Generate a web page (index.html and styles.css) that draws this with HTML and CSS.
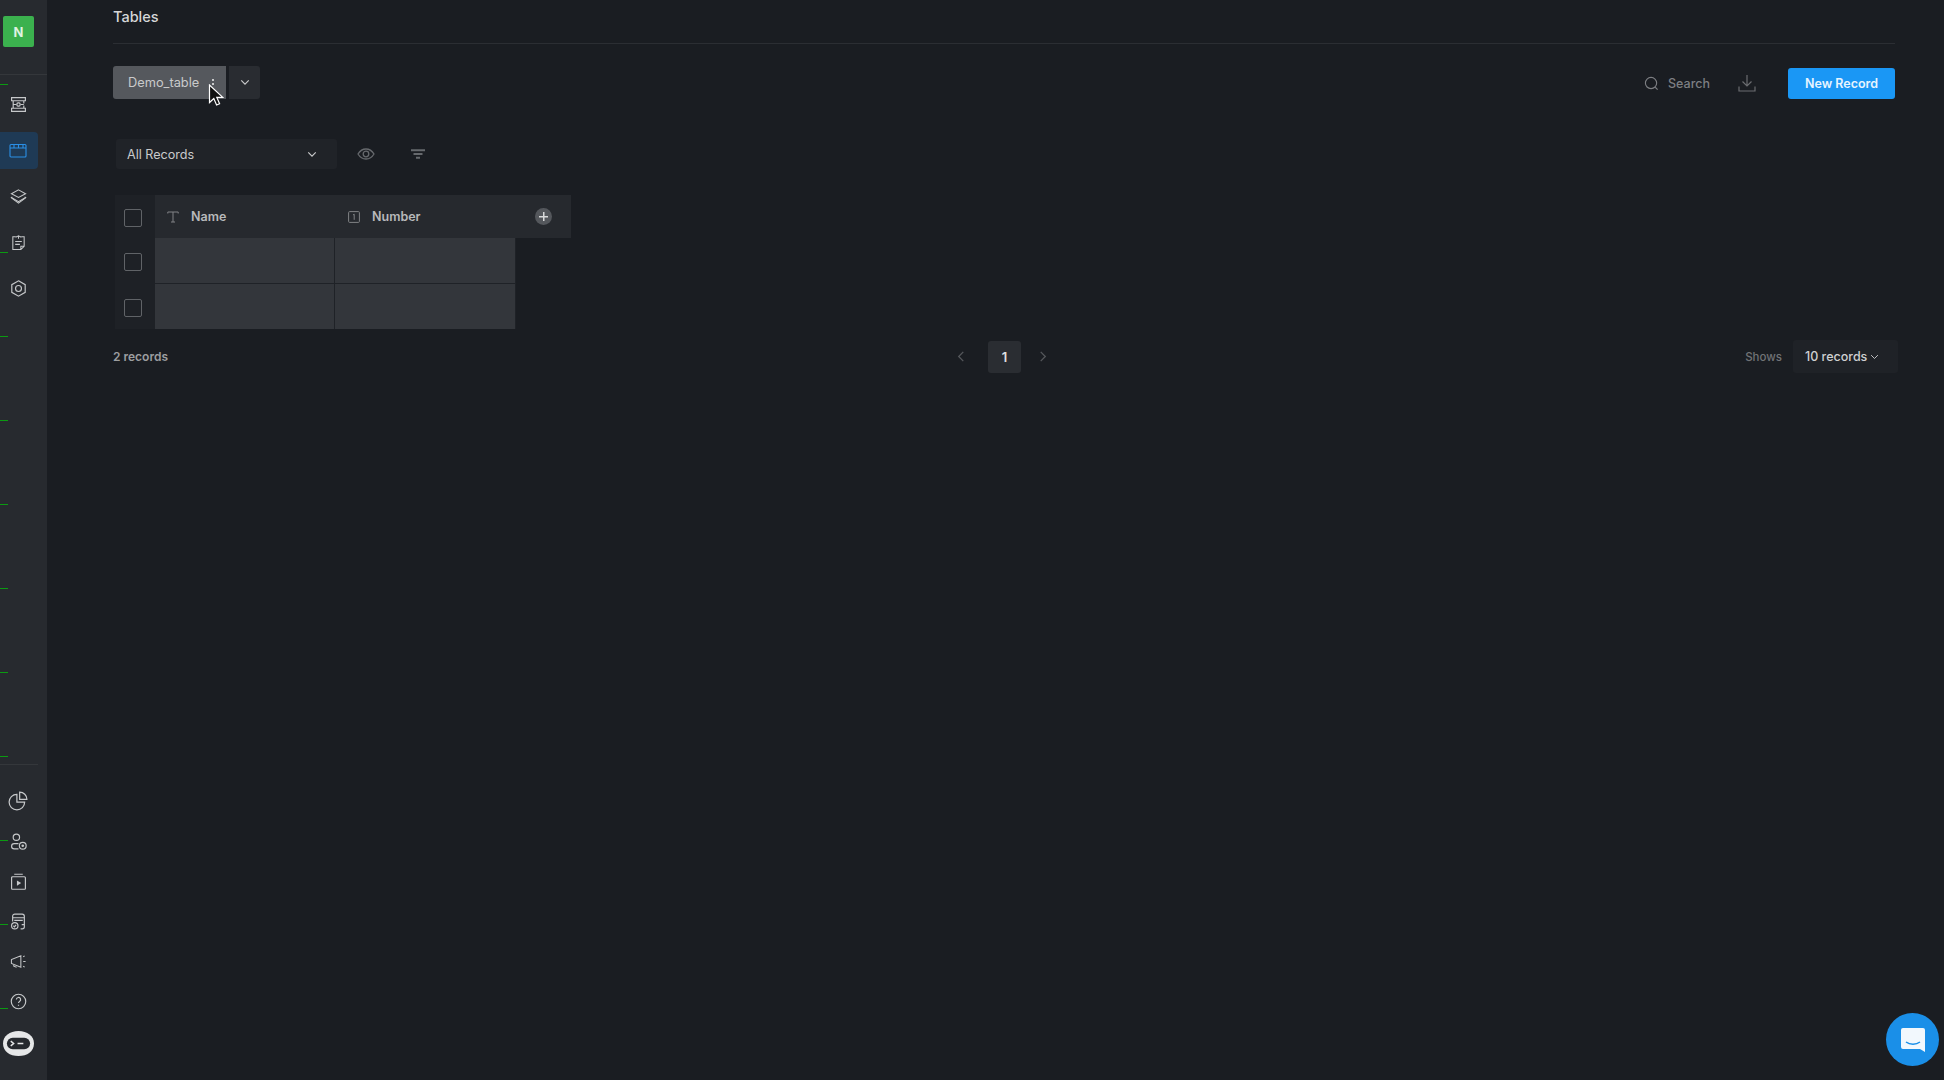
FILE: index.html
```html
<!DOCTYPE html>
<html lang="en">
<head>
<meta charset="utf-8">
<title>Tables</title>
<link rel="stylesheet" href="styles.css">
</head>
<body>
<div class="app">
  <aside class="sidebar">
    <div class="side-top"><div class="logo">N</div></div>
    <nav class="nav">
      <a class="nav-item"><svg class="ic" viewBox="0 0 16 16"><path d="M1.500 1.500h13v3h-13zM1.500 11.500h13v3h-13zM3 4.500v7M13 4.500V7M13 9v2.500M3 8h3M10 8h3"/><rect x="6.500" y="6.500" width="3" height="3" rx="1"/></svg></a>
      <a class="nav-item active"><svg class="ic wide" viewBox="0 0 18 16"><rect x="1" y="2" width="16" height="12.500" rx="1"/><path d="M1 5.500h16M5 2v3.500M9.500 2v3.500M14 2v3.500"/></svg></a>
      <a class="nav-item"><svg class="ic" viewBox="0 0 18 16"><path d="M9 1l7.500 4L9 9 1.500 5zM2.500 8.500L1.500 9 9 13.500 16.500 9l-1-.5"/><path d="M1.500 9.500L9 15l7.500-5.500"/></svg></a>
      <a class="nav-item"><svg class="ic" viewBox="0 0 16 18"><path d="M5 3H2v13.500h8.500L14 13V3h-3M8 1.500V5M5 3.500l3-1.500 3 1.500M4.500 8h7M4.500 11h5M10.500 16.500V13H14"/></svg></a>
      <a class="nav-item"><svg class="ic" viewBox="0 0 16 16"><path d="M8 .8l6.300 3.600v7.200L8 15.200l-6.300-3.600V4.400z"/><circle cx="8" cy="8" r="2.800"/></svg></a>
    </nav>
    <div class="side-bottom">
      <a class="nav-item small"><svg class="ic pie" viewBox="0 0 18 18"><path d="M8 3a7 7 0 1 0 7 7H8z"/><path d="M10.500 1a6.500 6.500 0 0 1 6.500 6.500h-6.500z"/></svg></a>
      <a class="nav-item small"><svg class="ic" viewBox="0 0 16 16"><circle cx="6" cy="4" r="3"/><path d="M8 10H4a2.500 2.500 0 0 0 0 5h4"/><circle cx="12" cy="12" r="3.200"/><circle class="dot" cx="12" cy="12" r="1.200"/></svg></a>
      <a class="nav-item small"><svg class="ic" viewBox="0 0 16 16"><path d="M4 1.200h8M2.500 3.500h11a1 1 0 0 1 1 1v10a.8.800 0 0 1-.8.800H2.300a.8.800 0 0 1-.8-.800v-10a1 1 0 0 1 1-1z"/><path class="dot" d="M6.500 7l4 2.500-4 2.500z"/></svg></a>
      <a class="nav-item small"><svg class="ic" viewBox="0 0 16 16"><path d="M2.500 8V3a2 2 0 0 1 2-2h7a2 2 0 0 1 2 2v10a2 2 0 0 1-2 2H10M2.500 4.500h11M4 7h8M11 11h2.500"/><circle cx="4.500" cy="12" r="3"/><path d="M3.200 12l1 1 1.500-1.800"/></svg></a>
      <a class="nav-item small"><svg class="ic" viewBox="0 0 18 16"><path d="M1.500 6v4l10 4V2zM4 11v2l3 1M14 3l1.500-1M14 8h2.500M14 13l1.500 1"/></svg></a>
      <a class="nav-item small"><svg class="ic" viewBox="0 0 16 16"><circle cx="8" cy="8" r="6.800"/><path d="M6 6.200a2 2 0 1 1 3 1.700c-.7.400-1 .8-1 1.500M8 11v1"/></svg></a>
      <div class="bot"><svg viewBox="0 0 32 26"><path class="bot-face" d="M16 0c9 0 16 5 16 13s-7 13-16 13S0 21 0 13 7 0 16 0z"/><rect class="bot-eye" x="4" y="7" width="24" height="12" rx="6"/><path class="bot-mark" d="M8 10.500l3 2.500-3 2.500M15 13h6"/></svg></div>
    </div>
  </aside>

  <main class="main">
    <header class="page-head"><h1 class="page-title">Tables</h1></header>

    <section class="toolbar">
      <div class="table-tab">
        <span class="tab-name">Demo_table</span>
        <span class="kebab"></span>
      </div>
      <button class="tab-more"><svg class="chev" viewBox="0 0 12 8"><path d="M1.500 1.500L6 6l4.500-4.500"/></svg></button>
      <div class="toolbar-right">
        <div class="search">
          <svg class="tool-ic" viewBox="0 0 16 16"><circle cx="7.500" cy="7.500" r="6"/><path d="M12 12l2.500 2.500"/></svg>
          <span>Search</span>
        </div>
        <svg class="tool-ic download" viewBox="0 0 18 18"><path d="M9 1v11M4.500 7.500L9 12l4.500-4.500M1 12.500V17h16v-4.500"/></svg>
        <button class="primary">New Record</button>
      </div>
    </section>

    <section class="view-row">
      <div class="view-select">
        <span>All Records</span>
        <svg class="chev" viewBox="0 0 12 8"><path d="M1.500 1.500L6 6l4.500-4.500"/></svg>
      </div>
      <svg class="view-ic eye" viewBox="0 0 18 12"><path d="M1 6c2-3.300 4.700-5 8-5s6 1.700 8 5c-2 3.300-4.700 5-8 5s-6-1.700-8-5z"/><circle cx="9" cy="6" r="2.800"/></svg>
      <svg class="view-ic funnel" viewBox="0 0 14 10"><path d="M0 1.200h14M2.500 5h9M5 8.800h4"/></svg>
    </section>

    <section class="grid">
      <div class="check-cell head-check"><span class="check"></span></div>
      <div class="head-cell">
        <svg class="col-ic" viewBox="0 0 12 12"><path d="M.8 2.500V1h10.400v1.500M6 1v10M4 11h4"/></svg>
        <span>Name</span>
      </div>
      <div class="head-cell">
        <svg class="col-ic" viewBox="0 0 12 12"><rect x=".6" y=".6" width="10.800" height="10.800" rx="1"/><path d="M5 4l1.200-.8v5.600"/></svg>
        <span>Number</span>
      </div>
      <div class="head-add"><span class="add"></span></div>

      <div class="check-cell"><span class="check"></span></div>
      <div class="cell"></div>
      <div class="cell"></div>
      <div class="empty"></div>

      <div class="check-cell"><span class="check"></span></div>
      <div class="cell"></div>
      <div class="cell"></div>
      <div class="empty"></div>
    </section>

    <footer class="foot">
      <div class="count">2 records</div>
      <div class="pager">
        <svg class="page-arrow prev" viewBox="0 0 8 12"><path d="M6.500 1L1.500 6l5 5"/></svg>
        <span class="page-num">1</span>
        <svg class="page-arrow" viewBox="0 0 8 12"><path d="M1.500 1l5 5-5 5"/></svg>
      </div>
      <div class="shows">
        <span class="shows-label">Shows</span>
        <div class="shows-select"><span>10 records</span><svg class="chev tiny" viewBox="0 0 12 8"><path d="M1.500 1.500L6 6l4.500-4.500"/></svg></div>
      </div>
    </footer>
  </main>
</div>

<svg class="cursor" viewBox="0 0 16 24"><path d="M1.500 1v17.500l4.300-4 2.800 6.500 3-1.300-2.800-6.300h6z"/></svg>

<div class="chat"><svg viewBox="0 0 24 26"><path class="chat-bubble" d="M2 0h20a2 2 0 0 1 2 2v22l-5-3H2a2 2 0 0 1-2-2V2a2 2 0 0 1 2-2z"/><path class="chat-smile" d="M5 14c4 3 10 3 14 0"/></svg></div>
</body>
</html>
```

FILE: styles.css
```css
* { box-sizing: border-box; }
html, body { margin: 0; height: 100%; }
body {
  background: #1a1d22;
  color: #d0d1d3;
  font-family: Inter, "Liberation Sans", sans-serif;
  font-size: 13px;
  overflow: hidden;
}
button { font: inherit; border: 0; padding: 0; }
svg { display: block; fill: none; stroke: currentColor; }

.app { display: flex; height: 1080px; }

.sidebar {
  width: 47px;
  flex: none;
  display: flex;
  flex-direction: column;
  background-color: #272a2f;
  background-image: linear-gradient(#0b9a12 0 1px, transparent 1px);
  background-size: 8px 84px;
  background-position: 0 84px;
  background-repeat: repeat-y;
}
.side-top {
  height: 75px;
  padding: 16px 0 0 3px;
  background: #272a2f;
  border-bottom: 1px solid #34373b;
  flex: none;
}
.logo {
  width: 31px;
  height: 31px;
  border-radius: 2px;
  background: #3bb14e;
  color: #dff3e2;
  font-weight: 700;
  font-size: 13px;
  display: flex;
  align-items: center;
  justify-content: center;
}
.nav { padding-top: 6px; display: flex; flex-direction: column; }
.nav-item {
  width: 38px;
  height: 46px;
  padding-right: 2px;
  display: flex;
  align-items: center;
  justify-content: center;
  color: #c6c8ca;
  border-radius: 0 4px 4px 0;
}
.nav-item .ic { width: 17px; height: 17px; stroke-width: 1.100; }
.nav-item .ic.pie { width: 20px; height: 20px; }
.nav-item .ic.wide { width: 18px; height: 17px; }
.nav-item.active {
  height: 37px;
  margin: 5px 0 4px;
  background: #1f3a55;
  color: #2a8fe6;
}
.dot { fill: currentColor; stroke: none; }
.side-bottom {
  margin-top: auto;
  padding-top: 17px;
  background: linear-gradient(#34373b, #34373b) 0 0 / 38px 1px no-repeat;
}
.nav-item.small { height: 40px; }
.bot { height: 59px; padding: 9px 0 0 3px; }
.bot svg { width: 31px; height: 27px; }
.bot-face { fill: #e6e7e8; stroke: none; }
.bot-eye { fill: #26292e; stroke: none; }
.bot-mark { stroke: #e6e7e8; stroke-width: 1.500; }

.main { flex: 1; padding: 0 49px 0 66px; min-width: 0; }

.page-head { height: 44px; border-bottom: 1px solid #2b2e33; }
.page-title {
  margin: 0;
  padding-top: 8px;
  font-size: 14.500px;
  line-height: 18px;
  font-weight: 500;
  color: #d6d7d8;
}

.toolbar { display: flex; align-items: center; height: 33px; margin-top: 22px; }
.table-tab {
  width: 113px;
  height: 33px;
  border-radius: 3px 0 0 3px;
  background: #55585d;
  color: #c9cacb;
  font-size: 12.800px;
  display: flex;
  align-items: center;
  justify-content: space-between;
  padding: 0 12px 1px 15px;
}
.kebab {
  width: 2px;
  height: 8px;
  background: radial-gradient(circle, #c9cacb 1px, transparent 1px) 0 0 / 2px 4px;
}
.tab-more {
  width: 31px;
  height: 33px;
  margin-left: 3px;
  border-radius: 0 3px 3px 0;
  background: #292c31;
  color: #c9cacb;
  display: flex;
  align-items: center;
  justify-content: center;
}
.chev { width: 10px; height: 7px; stroke-width: 1.400; }
.toolbar-right { margin-left: auto; display: flex; align-items: center; padding-top: 1px; }
.search { display: flex; align-items: center; gap: 9px; color: #7d7f83; font-size: 12.500px; font-weight: 500; }
.tool-ic { width: 15px; height: 15px; color: #7d7f83; stroke-width: 1.200; }
.tool-ic.download { width: 18px; height: 18px; margin-left: 28px; color: #6a6c70; }
.primary {
  width: 107px;
  height: 31px;
  margin-left: 32px;
  border-radius: 3px;
  background: #1a97f5;
  color: #e6f4ff;
  font-size: 12.500px;
  font-weight: 600;
}

.view-row { display: flex; align-items: center; height: 30px; margin: 40px 0 0 3px; }
.view-select {
  width: 221px;
  height: 30px;
  border-radius: 3px;
  background: #202328;
  color: #c9cacb;
  font-size: 12.600px;
  display: flex;
  align-items: center;
  justify-content: space-between;
  padding: 0 20px 0 11px;
}
.view-ic { color: #66696d; }
.eye { width: 18px; height: 12px; margin-left: 20px; stroke-width: 1.300; }
.funnel { width: 14px; height: 10px; margin-left: 36px; stroke-width: 1.900; }

.grid {
  display: grid;
  grid-template-columns: 40px 180px 181px 55px;
  grid-template-rows: 43px 46px 45px;
  width: 456px;
  margin: 26px 0 0 2px;
}
.check-cell {
  background: #1e2126;
  display: flex;
  align-items: center;
  padding: 2px 0 0 9px;
}
.check {
  width: 18px;
  height: 18px;
  border: 1px solid #606367;
  border-radius: 2px;
}
.head-cell {
  background: #26292e;
  display: flex;
  align-items: center;
  gap: 12px;
  padding-left: 12px;
  color: #b8b9bb;
  font-weight: 600;
  font-size: 12.500px;
}
.head-cell + .head-cell { padding-left: 13px; }
.col-ic { width: 12px; height: 12px; color: #808285; stroke-width: 1; }
.head-add { background: #26292e; display: flex; align-items: center; padding-left: 19px; }
.add {
  width: 17px;
  height: 17px;
  border-radius: 50%;
  background:
    linear-gradient(#d8d9da, #d8d9da) center / 9px 1.500px no-repeat,
    linear-gradient(#d8d9da, #d8d9da) center / 1.500px 9px no-repeat,
    #54575c;
}
.cell {
  background: #33363b;
  border-right: 1px solid #1f2227;
  border-bottom: 1px solid #1f2227;
}
.cell:nth-last-child(-n+3) { border-bottom: 0; }

.foot {
  display: grid;
  grid-template-columns: 1fr auto 1fr;
  align-items: center;
  height: 33px;
  margin-top: 11px;
}
.count { font-weight: 600; color: #9c9ea0; font-size: 12px; }
.pager { display: flex; align-items: center; gap: 18px; color: #55585c; margin-left: -4px; }
.pager .prev { margin-right: 5px; }
.page-arrow { width: 8px; height: 11px; stroke-width: 1.400; }
.page-num {
  width: 33px;
  height: 32px;
  border-radius: 3px;
  background: #2a2d32;
  color: #e0e1e2;
  font-weight: 600;
  display: flex;
  align-items: center;
  justify-content: center;
}
.shows { justify-self: end; display: flex; align-items: center; gap: 11px; margin-right: -3px; }
.shows-label { color: #717376; font-size: 11.500px; font-weight: 500; }
.shows-select {
  width: 105px;
  height: 33px;
  border-radius: 3px;
  background: #1f2227;
  color: #cfd0d1;
  font-size: 12.500px;
  font-weight: 500;
  display: flex;
  align-items: center;
  gap: 3px;
  padding-left: 12px;
}
.chev.tiny { width: 9px; height: 6px; stroke-width: 1.200; }

.cursor {
  position: absolute;
  left: 208px;
  top: 84px;
  width: 16px;
  height: 24px;
}
.cursor path { fill: #111; stroke: #fff; stroke-width: 1.200; }

.chat {
  position: absolute;
  right: 5px;
  bottom: 14px;
  width: 53px;
  height: 53px;
  border-radius: 50%;
  background: #1a8fe8;
  display: flex;
  align-items: center;
  justify-content: center;
  padding-top: 2px;
}
.chat svg { width: 24px; height: 26px; }
.chat-bubble { fill: #f2f8fd; stroke: none; }
.chat-smile { stroke: #1a8fe8; stroke-width: 1.500; }
```
